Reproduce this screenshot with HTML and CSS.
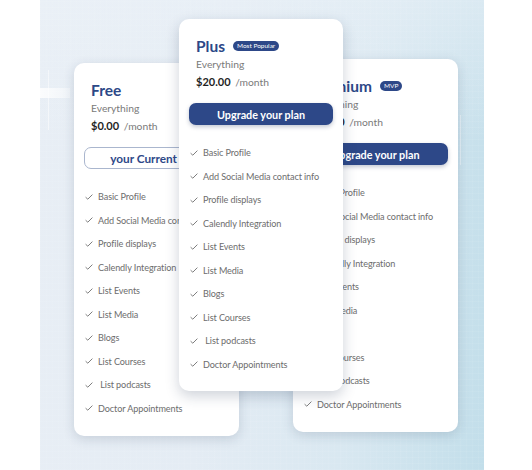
FILE: index.html
```html
<!DOCTYPE html>
<html lang="en">
<head>
<meta charset="utf-8">
<title>Pricing plans</title>
<link rel="stylesheet" href="styles.css">
</head>
<body>
<div class="panel">
  <div class="cards">
    <section class="card free">
      <header class="head">
        <div class="title-row"><h2 class="title">Free</h2></div>
        <p class="sub">Everything</p>
        <p class="price"><b>$0.00</b> <span>/month</span></p>
      </header>
      <button class="btn outline">your Current Plan</button>
      <ul class="features">
        <li><svg class="check" viewBox="0 0 8 6"><polyline points="0.6,3.2 2.8,5.2 7.4,0.6"/></svg>Basic Profile</li>
        <li><svg class="check" viewBox="0 0 8 6"><polyline points="0.6,3.2 2.8,5.2 7.4,0.6"/></svg>Add Social Media contact info</li>
        <li><svg class="check" viewBox="0 0 8 6"><polyline points="0.6,3.2 2.8,5.2 7.4,0.6"/></svg>Profile displays</li>
        <li><svg class="check" viewBox="0 0 8 6"><polyline points="0.6,3.2 2.8,5.2 7.4,0.6"/></svg>Calendly Integration</li>
        <li><svg class="check" viewBox="0 0 8 6"><polyline points="0.6,3.2 2.8,5.2 7.4,0.6"/></svg>List Events</li>
        <li><svg class="check" viewBox="0 0 8 6"><polyline points="0.6,3.2 2.8,5.2 7.4,0.6"/></svg>List Media</li>
        <li><svg class="check" viewBox="0 0 8 6"><polyline points="0.6,3.2 2.8,5.2 7.4,0.6"/></svg>Blogs</li>
        <li><svg class="check" viewBox="0 0 8 6"><polyline points="0.6,3.2 2.8,5.2 7.4,0.6"/></svg>List Courses</li>
        <li><svg class="check" viewBox="0 0 8 6"><polyline points="0.6,3.2 2.8,5.2 7.4,0.6"/></svg>&nbsp;List podcasts</li>
        <li><svg class="check" viewBox="0 0 8 6"><polyline points="0.6,3.2 2.8,5.2 7.4,0.6"/></svg>Doctor Appointments</li>
      </ul>
    </section>

    <section class="card plus">
      <header class="head">
        <div class="title-row"><h2 class="title">Plus</h2><span class="badge">Most Popular</span></div>
        <p class="sub">Everything</p>
        <p class="price"><b>$20.00</b> <span>/month</span></p>
      </header>
      <button class="btn primary">Upgrade your plan</button>
      <ul class="features">
        <li><svg class="check" viewBox="0 0 8 6"><polyline points="0.6,3.2 2.8,5.2 7.4,0.6"/></svg>Basic Profile</li>
        <li><svg class="check" viewBox="0 0 8 6"><polyline points="0.6,3.2 2.8,5.2 7.4,0.6"/></svg>Add Social Media contact info</li>
        <li><svg class="check" viewBox="0 0 8 6"><polyline points="0.6,3.2 2.8,5.2 7.4,0.6"/></svg>Profile displays</li>
        <li><svg class="check" viewBox="0 0 8 6"><polyline points="0.6,3.2 2.8,5.2 7.4,0.6"/></svg>Calendly Integration</li>
        <li><svg class="check" viewBox="0 0 8 6"><polyline points="0.6,3.2 2.8,5.2 7.4,0.6"/></svg>List Events</li>
        <li><svg class="check" viewBox="0 0 8 6"><polyline points="0.6,3.2 2.8,5.2 7.4,0.6"/></svg>List Media</li>
        <li><svg class="check" viewBox="0 0 8 6"><polyline points="0.6,3.2 2.8,5.2 7.4,0.6"/></svg>Blogs</li>
        <li><svg class="check" viewBox="0 0 8 6"><polyline points="0.6,3.2 2.8,5.2 7.4,0.6"/></svg>List Courses</li>
        <li><svg class="check" viewBox="0 0 8 6"><polyline points="0.6,3.2 2.8,5.2 7.4,0.6"/></svg>&nbsp;List podcasts</li>
        <li><svg class="check" viewBox="0 0 8 6"><polyline points="0.6,3.2 2.8,5.2 7.4,0.6"/></svg>Doctor Appointments</li>
      </ul>
    </section>

    <section class="card premium">
      <header class="head">
        <div class="title-row"><h2 class="title">Premium</h2><span class="badge">MVP</span></div>
        <p class="sub">Everything</p>
        <p class="price"><b>$50.00</b> <span>/month</span></p>
      </header>
      <button class="btn primary">Upgrade your plan</button>
      <ul class="features">
        <li><svg class="check" viewBox="0 0 8 6"><polyline points="0.6,3.2 2.8,5.2 7.4,0.6"/></svg>Basic Profile</li>
        <li><svg class="check" viewBox="0 0 8 6"><polyline points="0.6,3.2 2.8,5.2 7.4,0.6"/></svg>Add Social Media contact info</li>
        <li><svg class="check" viewBox="0 0 8 6"><polyline points="0.6,3.2 2.8,5.2 7.4,0.6"/></svg>Profile displays</li>
        <li><svg class="check" viewBox="0 0 8 6"><polyline points="0.6,3.2 2.8,5.2 7.4,0.6"/></svg>Calendly Integration</li>
        <li><svg class="check" viewBox="0 0 8 6"><polyline points="0.6,3.2 2.8,5.2 7.4,0.6"/></svg>List Events</li>
        <li><svg class="check" viewBox="0 0 8 6"><polyline points="0.6,3.2 2.8,5.2 7.4,0.6"/></svg>List Media</li>
        <li><svg class="check" viewBox="0 0 8 6"><polyline points="0.6,3.2 2.8,5.2 7.4,0.6"/></svg>Blogs</li>
        <li><svg class="check" viewBox="0 0 8 6"><polyline points="0.6,3.2 2.8,5.2 7.4,0.6"/></svg>List Courses</li>
        <li><svg class="check" viewBox="0 0 8 6"><polyline points="0.6,3.2 2.8,5.2 7.4,0.6"/></svg>&nbsp;List podcasts</li>
        <li><svg class="check" viewBox="0 0 8 6"><polyline points="0.6,3.2 2.8,5.2 7.4,0.6"/></svg>Doctor Appointments</li>
      </ul>
    </section>
  </div>
</div>
</body>
</html>
```

FILE: styles.css
```css
* {
  box-sizing: border-box;
  margin: 0;
  padding: 0;
}

html, body {
  width: 532px;
  height: 470px;
  overflow: hidden;
  background: #ffffff;
}

body {
  font-family: Lato, "Noto Sans", sans-serif;
}

.panel {
  margin-left: 40px;
  width: 444px;
  height: 470px;
  background:
    linear-gradient(90deg, rgba(255,255,255,0.85), rgba(255,255,255,0.35)) 0 88px / 30px 10px no-repeat,
    linear-gradient(90deg, rgba(255,255,255,0.5), rgba(255,255,255,0.5)) 8px 70px / 1px 60px no-repeat,
    linear-gradient(90deg, rgba(255,255,255,0.4), rgba(255,255,255,0.4)) 420px 115px / 1px 50px no-repeat,
    repeating-linear-gradient(0deg, rgba(255,255,255,0.06) 0 1px, transparent 1px 6px),
    repeating-linear-gradient(90deg, rgba(255,255,255,0.06) 0 1px, transparent 1px 6px),
    linear-gradient(180deg, rgba(236,242,248,0.5) 0%, rgba(236,242,248,0) 30%),
    linear-gradient(95deg, #e8eef5 0%, #e4ecf4 40%, #d9e8f1 70%, #c2deea 100%);
}

.cards {
  display: flex;
  align-items: flex-start;
  padding-left: 34px;
}

.card {
  flex: none;
  width: 165px;
  background: #ffffff;
  border-radius: 10px;
  padding: 17px 10px 16px;
  box-shadow: 0 3px 12px rgba(30, 50, 80, 0.16);
}

.free {
  margin-top: 63px;
}

.plus {
  width: 164px;
  margin-top: 19px;
  margin-left: -60px;
  position: relative;
  z-index: 2;
  padding-bottom: 15px;
  box-shadow: 0 5px 14px rgba(30, 50, 80, 0.22);
}

.premium {
  margin-top: 59px;
  margin-left: -50px;
}

.head {
  padding-left: 7px;
}

.title-row {
  display: flex;
  align-items: center;
  gap: 8px;
  height: 20px;
}

.title {
  font-size: 15.5px;
  font-weight: 700;
  line-height: 20px;
  color: #2c4887;
}

.badge {
  background: #2d4888;
  color: #ffffff;
  font-size: 6.5px;
  line-height: 10px;
  padding: 0 4px;
  border-radius: 6px;
}

.sub {
  font-size: 10.3px;
  line-height: 16px;
  color: #7a7a7a;
}

.price {
  margin-top: 2px;
  font-size: 10.3px;
  line-height: 16px;
  color: #7a7a7a;
}

.price b {
  font-size: 11px;
  font-weight: 700;
  color: #1f1f1f;
  margin-right: 2px;
}

.btn {
  display: block;
  width: 100%;
  height: 22px;
  margin-top: 13px;
  border-radius: 7px;
  font-family: inherit;
  font-weight: 700;
  font-size: 10.8px;
  cursor: pointer;
}

.btn.primary {
  background: #2d4888;
  color: #ffffff;
  border: none;
  box-shadow: 0 2px 4px rgba(20, 40, 80, 0.25);
}

.btn.outline {
  background: #ffffff;
  color: #2d4888;
  border: 1px solid #aab6ce;
  font-size: 11.8px;
}

.features {
  list-style: none;
  margin-top: 16px;
  padding-left: 1px;
}

.features li {
  display: flex;
  align-items: center;
  gap: 5px;
  height: 23.5px;
  font-size: 9.1px;
  letter-spacing: -0.1px;
  color: #6d6d6d;
  white-space: nowrap;
}

.check {
  flex: none;
  width: 8px;
  height: 6px;
  fill: none;
  stroke: #7d7d7d;
  stroke-width: 1;
}
```
